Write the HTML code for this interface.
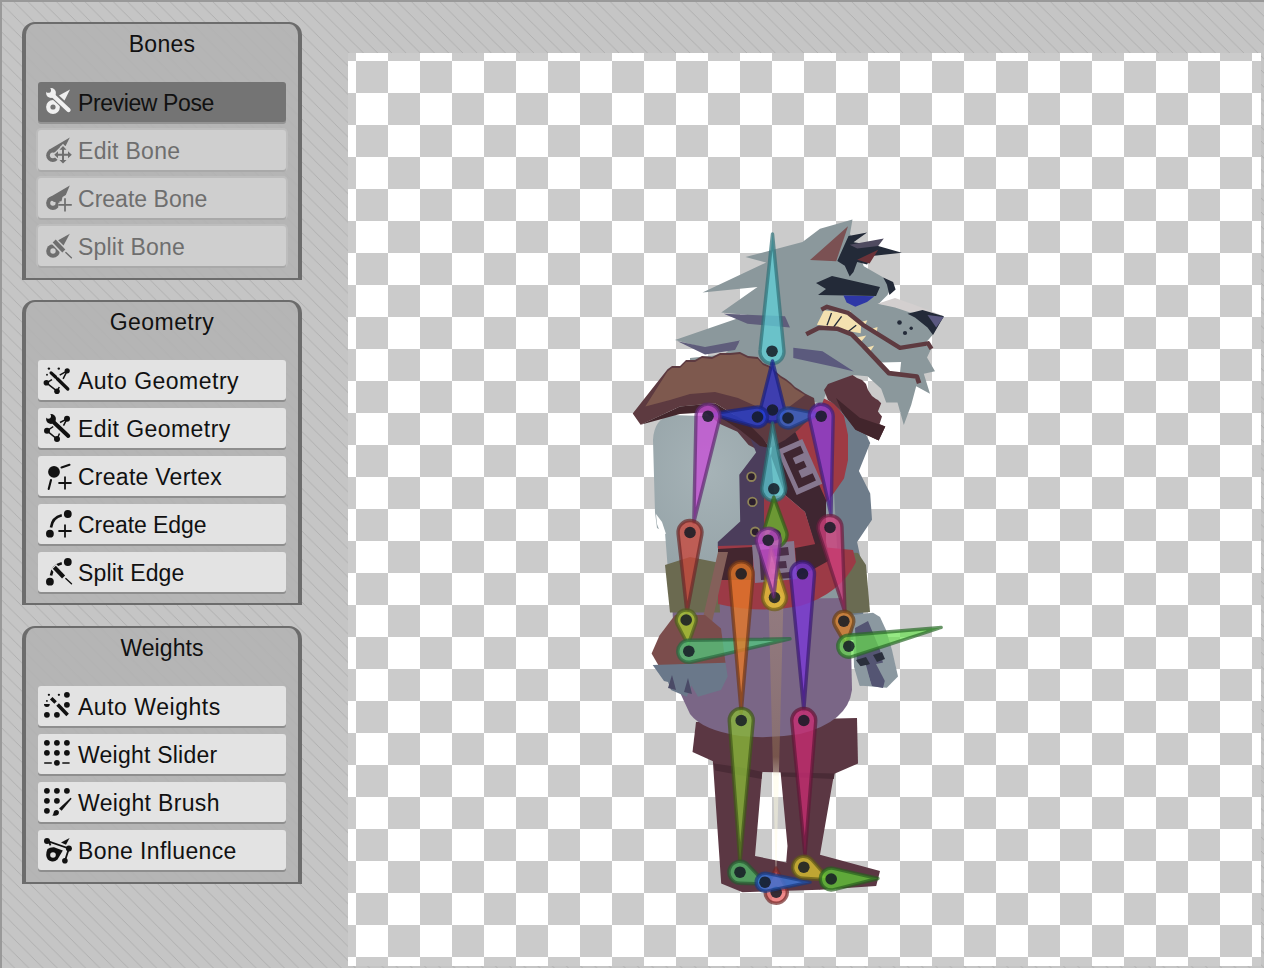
<!DOCTYPE html>
<html><head><meta charset="utf-8">
<style>
*{margin:0;padding:0;box-sizing:border-box}
html,body{width:1264px;height:968px;overflow:hidden;background:#c5c5c5;font-family:"Liberation Sans",sans-serif}
#bg{position:absolute;left:0;top:0}
.panel{position:absolute;left:22px;width:280px;border:solid #6c6c6c;border-width:2px 4px;border-radius:13px 13px 0 0;background:rgba(178,178,178,0.9)}
.title{position:absolute;left:0;right:0;top:7px;text-align:center;font-size:23px;color:#111;line-height:26px}
.btn{position:absolute;left:12px;width:248px;height:40px;border-radius:3px;background:#e3e3e3;box-shadow:0 2px 0 #8e8e8e}
.btn span{position:absolute;left:40px;top:8px;font-size:23px;line-height:26px;color:#111;white-space:nowrap}
.btn svg{position:absolute;left:2px;top:2px}
.btn.sel{background:#747474;box-shadow:0 2px 0 #939393}
.btn.dis{background:#cfcfcf;box-shadow:0 2px 0 #a9a9a9,0 0 0 2px #bdbdbd}
.btn.dis span{color:#6e6e6e}
#canvas{position:absolute;left:348px;top:53px;width:913px;height:913px;background-color:#fff;
 background-image:conic-gradient(#cbcbcb 25%,#fff 0 50%,#cbcbcb 0 75%,#fff 0);
 background-size:64px 64px;background-position:8px -24px}
#art{position:absolute;left:0;top:0}
</style></head><body>
<svg id="bg" width="1264" height="968">
<defs><pattern id="hat" patternUnits="userSpaceOnUse" width="14.2" height="14.2">
<path d="M-2,0 L16.2,18.2 M-2,-14.2 L16.2,4 M-2,14.2 L16.2,32.4" stroke="#a6a6a6" stroke-width="0.75"/>
</pattern></defs>
<rect width="1264" height="968" fill="#c5c5c5"/>
<rect width="1264" height="968" fill="url(#hat)"/>
<rect x="0" y="0" width="1264" height="2" fill="#999"/>
<rect x="0" y="0" width="2" height="968" fill="#999"/>
</svg>
<div id="canvas"></div>

<div class="panel" style="top:22px;height:258px">
 <div class="title" style="letter-spacing:0.25px">Bones</div>
 <div class="btn sel" style="top:58px"><svg width="36" height="36" viewBox="0 0 36 36"><circle cx="13" cy="23" r="6.9" fill="#f0f0f0"/><circle cx="13" cy="23" r="2.6" fill="#747474"/>
<path d="M12.5,11 L28.5,26" stroke="#747474" stroke-width="6.5" stroke-linecap="round"/>
<path d="M12.5,11 L28.5,26" stroke="#f0f0f0" stroke-width="4.4" stroke-linecap="round"/>
<circle cx="11" cy="9" r="4.9" fill="#f0f0f0"/><circle cx="8.4" cy="6.2" r="2.6" fill="#747474"/>
<path d="M19,11.5 L30,5.6 L24.5,16.5Z" fill="#f0f0f0"/></svg><span style="letter-spacing:-0.39px">Preview Pose</span></div>
 <div class="btn dis" style="top:106px"><svg width="36" height="36" viewBox="0 0 36 36"><circle cx="12.8" cy="23.3" r="6.6" fill="#6e6e6e"/><path d="M29.8,5.6 L8.5,18 L14,21 L22.5,13.5 L25.6,14Z" fill="#6e6e6e"/>
<circle cx="12.8" cy="23.3" r="2.9" fill="#cfcfcf"/>
<path d="M14.5,22.8 L31.5,22.8 M23,14 L23,31.5" stroke="#cfcfcf" stroke-width="5"/>
<path d="M13.8,22.8 L18.2,18.8 L18.2,26.8Z M32.2,22.8 L27.8,18.8 L27.8,26.8Z M23,13.6 L19,18 L27,18Z M23,32 L19,27.6 L27,27.6Z" fill="#cfcfcf" stroke="#cfcfcf" stroke-width="2.4"/>
<path d="M16.5,22.8 L29.5,22.8 M23,16 L23,29.5" stroke="#6e6e6e" stroke-width="2"/>
<path d="M14.3,22.8 L18,19.3 L18,26.3Z M31.8,22.8 L28,19.3 L28,26.3Z M23,14 L19.5,17.7 L26.5,17.7Z M23,31.6 L19.5,27.9 L26.5,27.9Z" fill="#6e6e6e"/></svg><span style="letter-spacing:0.29px">Edit Bone</span></div>
 <div class="btn dis" style="top:154px"><svg width="36" height="36" viewBox="0 0 36 36"><circle cx="12.9" cy="23.1" r="6.8" fill="#6e6e6e"/><circle cx="12.9" cy="23.1" r="2.7" fill="#cfcfcf"/>
<path d="M29.8,5.6 L8.5,18 L14,22 L21.5,21.3 L22.5,17 L25.8,15Z" fill="#6e6e6e"/>
<path d="M18.3,24.9 L31.8,24.9 M25,18.3 L25,31.5" stroke="#cfcfcf" stroke-width="4.2"/>
<path d="M18.3,24.9 L31.8,24.9 M25,18.3 L25,31.5" stroke="#6e6e6e" stroke-width="1.7"/></svg><span style="letter-spacing:0.02px">Create Bone</span></div>
 <div class="btn dis" style="top:202px"><svg width="36" height="36" viewBox="0 0 36 36"><circle cx="13" cy="23" r="6.8" fill="#6e6e6e"/><circle cx="13" cy="23" r="2.7" fill="#cfcfcf"/>
<path d="M13.5,12.5 L24,23.5" stroke="#cfcfcf" stroke-width="7"/>
<path d="M14.2,13 L23.8,23" stroke="#6e6e6e" stroke-width="4.2"/>
<path d="M25.8,24.6 L31.4,29.7" stroke="#6e6e6e" stroke-width="1.4" stroke-linecap="round"/>
<path d="M18.2,12.3 L29.8,5.8 L23.5,17.5Z" fill="#6e6e6e"/></svg><span style="letter-spacing:0.21px">Split Bone</span></div>
</div>
<div class="panel" style="top:300px;height:305px">
 <div class="title" style="letter-spacing:0.43px">Geometry</div>
 <div class="btn " style="top:58px"><svg width="36" height="36" viewBox="0 0 36 36"><circle cx="8.9" cy="6.6" r="1.2" fill="#111"/><circle cx="18.8" cy="6.6" r="1.2" fill="#111"/><circle cx="7" cy="12.8" r="0.95" fill="#111"/>
<path d="M27.2,8.8 L19.7,13.1 M27.2,8.8 L23.1,16.8 M6.4,20.8 L12,17.7 M6.4,20.8 L17,29.2 L19.3,25" stroke="#111" stroke-width="1.5" fill="none"/>
<circle cx="27.2" cy="8.8" r="2.6" fill="#111"/><circle cx="6.4" cy="20.8" r="2.8" fill="#111"/><circle cx="17" cy="29.2" r="2.8" fill="#111"/>
<path d="M11.1,10.9 L15.6,15 M17.3,16.7 L27.8,27" stroke="#111" stroke-width="3.3" stroke-linecap="round"/></svg><span style="letter-spacing:0.49px">Auto Geometry</span></div>
 <div class="btn " style="top:106px"><svg width="36" height="36" viewBox="0 0 36 36"><path d="M27,8.8 L20,12.5 M27,8.8 L23.5,15.7 M7,20.8 L13.3,16.5 M7,20.8 L17,29 L19.5,23.5" stroke="#111" stroke-width="1.5" fill="none"/>
<circle cx="27" cy="8.8" r="3" fill="#111"/><circle cx="7" cy="20.8" r="3" fill="#111"/><circle cx="17" cy="29" r="3" fill="#111"/>
<path d="M14,12.5 L28.3,26" stroke="#e3e3e3" stroke-width="6.5" stroke-linecap="round"/>
<path d="M14,12.5 L28.3,26" stroke="#111" stroke-width="4" stroke-linecap="round"/>
<circle cx="11" cy="9" r="4.9" fill="#111"/><circle cx="8.4" cy="6.1" r="2.6" fill="#e3e3e3"/></svg><span style="letter-spacing:0.44px">Edit Geometry</span></div>
 <div class="btn " style="top:154px"><svg width="36" height="36" viewBox="0 0 36 36"><circle cx="14" cy="13.9" r="5.9" fill="#111"/>
<path d="M21.5,9.5 L29.5,6.8 M11,22 L8.7,31" stroke="#111" stroke-width="2.1" stroke-linecap="round"/>
<path d="M18.4,25 L31.6,25 M25,18.4 L25,31.6" stroke="#111" stroke-width="1.8"/></svg><span style="letter-spacing:0.26px">Create Vertex</span></div>
 <div class="btn " style="top:202px"><svg width="36" height="36" viewBox="0 0 36 36"><circle cx="27.8" cy="8" r="3.9" fill="#111"/><circle cx="9.9" cy="27.7" r="3.9" fill="#111"/>
<path d="M11,21.5 Q12.3,11.5 21.8,9.3" stroke="#111" stroke-width="2.6" fill="none"/>
<path d="M18.4,25 L31.6,25 M25,18.4 L25,31.6" stroke="#111" stroke-width="1.8"/></svg><span style="letter-spacing:-0.05px">Create Edge</span></div>
 <div class="btn " style="top:250px"><svg width="36" height="36" viewBox="0 0 36 36"><circle cx="27.8" cy="8" r="3.9" fill="#111"/><circle cx="9.9" cy="27.7" r="3.9" fill="#111"/>
<path d="M11,21.5 Q12.3,11.5 21.8,9.3" stroke="#111" stroke-width="2.6" fill="none"/>
<path d="M13.5,12.5 L24,23.5" stroke="#e3e3e3" stroke-width="7.5"/>
<path d="M14.3,13.2 L23.6,23" stroke="#111" stroke-width="4.2"/>
<path d="M25.8,24.6 L31.5,29.7" stroke="#111" stroke-width="1.4" stroke-linecap="round"/></svg><span style="letter-spacing:0.17px">Split Edge</span></div>
</div>
<div class="panel" style="top:626px;height:258px">
 <div class="title" style="letter-spacing:0.08px">Weights</div>
 <div class="btn " style="top:58px"><svg width="36" height="36" viewBox="0 0 36 36"><circle cx="8.9" cy="6.8" r="1.15" fill="#111"/><circle cx="18.9" cy="6.8" r="1.15" fill="#111"/><circle cx="6.9" cy="12.9" r="0.95" fill="#111"/>
<path d="M4,16.1 L9.8,16.1 A2.9,2.9 0 0 1 4,16.1Z" fill="#111"/>
<circle cx="26.9" cy="6.8" r="2.9" fill="#111"/><circle cx="26.9" cy="16.8" r="2.9" fill="#111"/><circle cx="6.9" cy="26.8" r="2.9" fill="#111"/><circle cx="16.9" cy="26.8" r="2.9" fill="#111"/>
<path d="M11.2,10.3 L15.6,14.5 M17.6,16.6 L27.6,27" stroke="#111" stroke-width="3.6"/></svg><span style="letter-spacing:0.53px">Auto Weights</span></div>
 <div class="btn " style="top:106px"><svg width="36" height="36" viewBox="0 0 36 36"><circle cx="6.9" cy="6.8" r="2.9" fill="#111"/><circle cx="6.9" cy="16.8" r="2.9" fill="#111"/><circle cx="16.9" cy="6.8" r="2.9" fill="#111"/><circle cx="16.9" cy="16.8" r="2.9" fill="#111"/><circle cx="26.9" cy="6.8" r="2.9" fill="#111"/><circle cx="26.9" cy="16.8" r="2.9" fill="#111"/><circle cx="16.9" cy="26.8" r="2.9" fill="#111"/><path d="M4.2,27 L11.8,27 M22.3,27 L29.6,27" stroke="#111" stroke-width="1.6"/></svg><span style="letter-spacing:0.23px">Weight Slider</span></div>
 <div class="btn " style="top:154px"><svg width="36" height="36" viewBox="0 0 36 36"><circle cx="6.9" cy="6.8" r="2.9" fill="#111"/><circle cx="16.9" cy="6.8" r="2.9" fill="#111"/><circle cx="26.9" cy="6.8" r="2.9" fill="#111"/><circle cx="6.9" cy="16.8" r="2.9" fill="#111"/><circle cx="16.9" cy="16.8" r="2.9" fill="#111"/><circle cx="6.9" cy="26.8" r="2.9" fill="#111"/><path d="M19.1,24.5 L30.6,13.8 L31.6,14.8 L21.6,26.8Z" fill="#111"/>
<path d="M12.2,31.6 Q13.3,30.8 13.6,28.8 Q14,26 16.5,26 Q19.3,26.3 18.9,29 Q18.4,31.8 14.5,31.7Z" fill="#111"/></svg><span style="letter-spacing:0.35px">Weight Brush</span></div>
 <div class="btn " style="top:202px"><svg width="36" height="36" viewBox="0 0 36 36"><path d="M7,8.9 L28.9,16.5 L24.9,29 M9,10 L10.5,13.3" stroke="#111" stroke-width="1.8" fill="none"/>
<circle cx="7" cy="8.9" r="3" fill="#111"/><circle cx="28.9" cy="16.5" r="3" fill="#111"/><circle cx="24.9" cy="28.8" r="2.8" fill="#111"/>
<path d="M21,10.6 L29.6,5.9 L26,12.7Z" fill="#111"/>
<path d="M7.5,17 Q10,15 14,15.2 L22.8,18.5 L17.5,27.5 Q15,30 12,29.5 Q6.5,28.5 6.2,23 Q6.3,19.5 7.5,17Z" fill="#111"/>
<circle cx="13" cy="23" r="2.8" fill="#e3e3e3"/></svg><span style="letter-spacing:0.38px">Bone Influence</span></div>
</div>
<svg id="art" width="1264" height="968" viewBox="0 0 1264 968">
<polygon points="712.5,756.0 762.5,768.5 755.0,856.0 785.0,862.2 820.0,866.0 820.0,889.8 742.5,892.2 721.2,883.5" fill="#5b3743" />
<polygon points="780.0,766.0 835.0,768.5 820.0,854.8 880.0,871.0 876.2,886.0 820.0,889.8 786.2,862.2 787.5,846.0" fill="#5b3743" />
<polygon points="713.8,763.5 762.5,770.5 761.5,779.0 715.0,770.5" fill="#4a2b36" />
<polygon points="780.5,769.0 835.0,771.5 833.8,779.0 781.5,776.5" fill="#4a2b36" />
<polygon points="692.5,752.0 696.0,722.0 857.0,718.0 858.0,763.5 835.0,773.5 762.5,772.0 712.5,761.0" fill="#5b3743" />
<polygon points="826.0,400.0 850.0,410.0 864.5,431.8 870.2,443.0 858.9,471.0 870.2,493.5 872.0,519.7 857.1,542.1 862.7,568.3 866.0,590.0 860.0,640.0 830.0,640.0 826.0,500.0" fill="#6e7c8a" />
<defs><radialGradient id="armg" cx="0.3" cy="0.25" r="0.8"><stop offset="0" stop-color="#a6b3b7"/><stop offset="1" stop-color="#8a989d"/></radialGradient></defs>
<path d="M653,440 Q654,418 672,415 L760,418 L830,420 L840,600 L800,640 L680,640 L667.5,565 L665,532.5 L657,528 L655,512.5 Z" fill="url(#armg)"/>
<polygon points="656.0,514.0 662.0,522.0 666.0,534.0 660.0,532.0 657.0,524.0" fill="#ffffff" />
<path d="M672,600 L850,598 L852,690 Q848,722 800,734 Q770,739 740,736 Q702,730 690,714 L676,684 Z" fill="#7a6686"/>
<polygon points="705.0,412.0 762.0,418.0 762.0,452.0 748.6,444.9 737.4,431.8 720.0,424.0" fill="#5a3a44" />
<polygon points="756.1,452.4 739.3,474.8 740.2,521.5 717.8,542.1 717.8,547.7 778.5,547.7 771.0,456.0 763.6,437.4 745.0,425.0" fill="#4b3d5b" />
<circle cx="751.4" cy="476.7" r="4.3" fill="#2a1e2c" stroke="#8f8458" stroke-width="1.8"/>
<circle cx="752.4" cy="501.9" r="4.3" fill="#2a1e2c" stroke="#8f8458" stroke-width="1.8"/>
<circle cx="755.2" cy="531.8" r="4.3" fill="#2a1e2c" stroke="#8f8458" stroke-width="1.8"/>
<polygon points="823.0,398.0 835.0,404.0 844.0,416.0 848.0,435.0 848.0,460.0 844.0,478.5 830.9,497.2 823.4,504.7 793.5,428.0 804.7,418.7" fill="#9e3a44" />
<polygon points="774.8,422.4 793.5,428.0 826.0,500.0 826.0,552.0 816.0,550.0 805.0,512.0 785.0,495.0 771.0,456.0" fill="#3f2631" />
<polygon points="764.0,497.0 785.0,495.0 805.0,512.0 817.0,550.0 764.0,550.0" fill="#973845" />
<g transform="rotate(-24 799.5 467)"><rect x="785.5" y="442.5" width="28" height="49" fill="#86778f"/><path d="M790,448 L809,448 L809,456 L797,456 L797,463 L806,463 L806,470 L797,470 L797,478 L809,478 L809,486 L790,486Z" fill="#3f2631"/></g>
<polygon points="843.0,552.0 858.0,553.0 866.0,565.0 870.0,612.0 845.0,614.0" fill="#6a6b52" />
<polygon points="665.0,565.0 690.0,557.0 717.5,562.5 720.0,612.5 670.0,612.5" fill="#6b6a50" />
<path d="M718,546 L718,604 Q760,614 800,606 Q840,594 856,562 L853,550 L790,544 Z" fill="#9c3a46"/>
<polygon points="718.0,549.0 753.0,547.0 753.0,580.0 718.0,580.0" fill="#43262f" />
<polygon points="795.0,548.0 826.0,542.0 830.0,560.0 812.0,570.0 797.0,576.0" fill="#43262f" />
<polygon points="752.0,545.0 794.0,541.0 797.0,579.0 755.0,583.0" fill="#86778f" />
<polygon points="759.0,550.0 788.0,547.0 789.0,555.0 770.0,557.0 771.0,562.0 786.0,561.0 787.0,568.0 771.0,569.0 772.0,574.0 790.0,572.0 791.0,578.0 761.0,580.0" fill="#4a3048" />
<polygon points="718.0,552.0 728.0,552.0 712.0,622.0 702.0,622.0" fill="#84605a" />
<polygon points="651.6,653.6 659.5,635.5 675.0,615.0 705.0,615.0 721.0,628.6 725.5,662.7 705.0,673.0 660.0,668.0" fill="#7b4d4c" />
<polygon points="652.7,665.0 725.5,662.7 727.7,676.4 721.0,690.0 698.0,696.8 691.4,685.5 686.8,696.8 671.0,690.0 668.0,682.0 664.0,681.0" fill="#6a788a" />
<polygon points="672.0,675.0 676.0,690.0 668.0,688.0" fill="#4a4a66" />
<polygon points="688.0,678.0 692.0,694.0 684.0,692.0" fill="#4a4a66" />
<polygon points="852.7,615.0 873.0,612.7 880.0,617.0 886.0,630.0 892.0,650.0 898.0,676.4 886.8,687.7 859.5,685.5 854.0,667.0" fill="#8b98a0" />
<polygon points="855.0,628.0 868.0,621.0 880.0,650.0 886.0,676.0 883.0,688.0 872.0,686.0 866.0,668.0 857.0,662.0" fill="#545573" />
<polygon points="856.0,660.0 866.0,657.0 870.0,664.0 861.0,667.0" fill="#2a2f3c" />
<polygon points="873.0,655.0 882.0,652.0 885.0,659.0 877.0,662.0" fill="#2a2f3c" />
<polygon points="857.0,667.0 866.0,665.0 871.0,684.0 860.0,686.0" fill="#8b98a0" />
<polygon points="876.0,664.0 886.0,662.0 897.0,676.0 887.0,685.0" fill="#8b98a0" />
<polygon points="852.5,219.5 850.0,233.8 863.8,266.2 882.5,277.0 892.5,284.5 887.5,295.0 878.8,303.8 915.0,308.0 943.8,316.2 933.0,334.5 923.8,345.0 932.0,347.0 927.0,357.5 935.0,371.2 923.8,373.8 930.0,393.8 916.2,386.2 911.2,405.0 903.8,425.0 897.5,402.5 886.2,402.5 881.2,388.8 867.5,376.2 852.5,375.0 830.0,385.0 828.0,388.0 822.0,404.0 806.0,400.0 785.0,398.0 760.0,388.0 740.0,375.0 690.0,365.0 690.0,358.0 723.8,354.5 740.0,341.2 705.0,348.0 675.0,340.0 747.5,315.0 721.2,312.5 757.5,287.0 702.5,292.5 766.2,262.5 745.5,257.0 802.5,242.0 820.0,228.8" fill="#8b989c" />
<polygon points="632.7,413.6 667.5,369.3 672.0,366.0 680.0,366.0 686.0,360.0 695.0,360.0 702.0,356.0 712.0,357.0 720.0,353.0 730.0,353.0 740.0,352.0 748.0,356.0 757.7,357.0 763.0,363.0 770.0,366.0 775.0,371.0 781.0,376.0 786.0,379.0 791.0,383.0 795.0,387.0 800.0,390.0 805.0,393.5 814.0,398.0 816.0,410.0 806.0,422.0 798.0,430.0 785.0,440.0 770.0,448.0 762.4,438.0 746.6,422.3 715.0,403.3 680.0,406.5 640.6,424.7" fill="#5d3a40" />
<polygon points="645.3,406.5 667.5,371.6 672.0,368.0 680.0,368.0 686.0,362.0 695.0,362.0 702.0,358.0 712.0,359.0 720.0,355.0 730.0,355.0 740.0,354.0 748.0,358.0 757.7,359.0 763.0,365.0 770.0,368.0 775.0,373.0 781.0,378.0 786.0,381.0 791.0,385.0 795.0,389.0 800.0,392.0 805.0,395.0 785.0,410.0 760.0,408.0 738.0,398.0 715.0,392.0 690.0,394.0 670.0,400.0" fill="#7e594e" />
<polygon points="640.6,424.7 680.0,406.5 715.0,403.3 746.6,422.3 762.4,438.0 770.0,448.0 760.0,446.0 740.0,430.0 712.0,412.0 680.0,414.0" fill="#43262c" />
<polygon points="880.9,362.4 901.1,361.9 900.0,372.5 888.8,372.5" fill="#ffffff" />
<polygon points="723.8,313.8 785.0,316.2 790.0,327.5 747.5,323.8" fill="#5f5d7b" />
<polygon points="677.5,341.2 705.0,347.0 740.0,340.5 735.0,350.0 705.0,354.5" fill="#5f5d7b" />
<polygon points="793.3,347.8 822.5,351.2 853.9,371.4 839.3,368.0 793.3,357.9" fill="#5b5a7d" />
<polygon points="824.0,390.0 828.0,384.0 852.5,375.0 857.0,378.0 862.0,380.0 866.0,384.0 868.0,390.0 872.0,396.0 876.0,399.0 878.0,400.0 881.2,403.3 877.9,411.6 882.0,416.5 879.5,424.0 885.3,426.4 878.7,440.5 855.5,429.8 842.3,412.4 834.0,404.0 828.0,400.0" fill="#5c363f" />
<polygon points="836.0,398.0 859.7,417.8 885.3,426.4 878.7,440.5 855.5,429.8 842.3,412.4" fill="#42252c" />
<polygon points="810.0,260.0 848.0,226.2 836.2,261.2" fill="#7b5153" />
<polygon points="837.3,260.9 848.5,236.1 867.1,232.4 853.5,242.3 878.2,246.0 901.8,252.8 872.0,255.9 867.1,264.6 857.2,262.1 853.5,272.0 849.7,276.4 844.8,265.8" fill="#232a38" />
<polygon points="849.7,244.8 883.8,238.6 878.2,246.0 857.2,248.5" fill="#4f4b60" />
<polygon points="857.2,259.7 878.2,249.7 869.6,263.4" fill="#6b3238" />
<polygon points="816.0,283.0 832.0,276.0 880.0,287.0 876.0,296.0 818.0,295.0 826.0,289.0" fill="#232a38" />
<polygon points="883.2,277.6 893.1,282.0 895.6,289.4 889.4,295.0 886.9,284.4" fill="#232a38" />
<polygon points="843.5,295.6 874.5,296.2 867.0,302.0 855.3,306.7 846.6,302.4" fill="#2e37a6" />
<polygon points="877.5,303.8 895.0,298.0 915.0,305.0 943.8,316.2 910.0,312.5 895.0,307.5" fill="#d3cfcf" />
<polygon points="907.5,313.8 922.5,310.0 943.8,316.2 933.0,335.0 927.5,327.5 915.0,317.5" fill="#232a38" />
<polygon points="927.5,315.0 943.8,317.0 936.2,327.5" fill="#5a5880" />
<circle cx="899.5" cy="322.5" r="2.3" fill="#232a38"/>
<circle cx="905" cy="333" r="2.1" fill="#232a38"/>
<circle cx="911.2" cy="328.2" r="1.7" fill="#232a38"/>
<polygon points="816.9,324.8 824.2,310.2 848.3,313.5 861.2,324.8 860.7,333.2 848.3,331.0 833.7,327.6" fill="#f4e1b0" />
<polyline points="827.0,325.3 831.5,313.0" fill="none" stroke="#232a38" stroke-width="1.3" stroke-linejoin="round" />
<polyline points="833.7,327.0 841.6,316.3" fill="none" stroke="#232a38" stroke-width="1.3" stroke-linejoin="round" />
<polyline points="848.3,331.5 856.2,325.3" fill="none" stroke="#232a38" stroke-width="1.3" stroke-linejoin="round" />
<polygon points="855.1,337.7 866.3,335.4 860.7,342.2" fill="#f4e1b0" />
<polygon points="866.3,347.8 874.2,345.6 869.7,352.3" fill="#f4e1b0" />
<polygon points="860.7,322.0 867.4,320.3 864.0,327.6" fill="#f4e1b0" />
<polygon points="871.9,328.7 877.5,327.0 876.4,334.3" fill="#f4e1b0" />
<polygon points="846.6,311.9 850.6,310.7 849.4,315.2" fill="#f4e1b0" />
<polyline points="821.3,309.6 827.0,306.8 848.3,313.0 862.9,324.8 900.0,347.8 928.1,343.3 931.5,348.9" fill="none" stroke="#5e3a40" stroke-width="4.4" stroke-linejoin="round" />
<polyline points="806.2,334.3 819.1,327.8 837.1,328.7 851.7,334.3 862.9,345.6 888.8,373.1 916.9,376.5 919.1,383.2" fill="none" stroke="#5e3a40" stroke-width="4.6" stroke-linejoin="round" />
<defs><linearGradient id="palg" gradientUnits="userSpaceOnUse" x1="0" y1="600" x2="0" y2="885"><stop offset="0" stop-color="#b09478"/><stop offset="0.55" stop-color="#9a7a58"/><stop offset="0.62" stop-color="#fffbe0"/><stop offset="1" stop-color="#fffbe0"/></linearGradient></defs>
<path d="M768.5,597.7 L776.0,885.0 L783.5,597.7 A7.5,7.5 0 1 0 768.5,597.7Z" fill="url(#palg)" fill-opacity="0.45" stroke="none" stroke-opacity="0.7" stroke-width="3.4" stroke-linejoin="round"/>
<path d="M783.9,350.1 L772.5,234.0 L760.1,350.0 A12,12 0 1 0 783.9,350.1Z" fill="#5fd0d8" fill-opacity="0.75" stroke="#2f7078" stroke-opacity="0.7" stroke-width="3.4" stroke-linejoin="round"/>
<circle cx="772.0" cy="351.2" r="5.8" fill="#141a24" fill-opacity="0.85"/>
<path d="M784.1,407.1 L772.5,361.0 L760.9,407.1 A12,12 0 1 0 784.1,407.1Z" fill="#2a35d0" fill-opacity="0.75" stroke="#1a2080" stroke-opacity="0.7" stroke-width="3.4" stroke-linejoin="round"/>
<circle cx="772.5" cy="410.0" r="5.8" fill="#141a24" fill-opacity="0.85"/>
<path d="M756.0,407.1 L710.0,414.0 L754.8,426.6 A10,10 0 1 0 756.0,407.1Z" fill="#2440d8" fill-opacity="0.75" stroke="#1a2480" stroke-opacity="0.7" stroke-width="3.4" stroke-linejoin="round"/>
<circle cx="757.5" cy="417.0" r="5.8" fill="#141a24" fill-opacity="0.85"/>
<path d="M792.3,427.0 L820.0,414.0 L789.9,408.2 A10,10 0 1 0 792.3,427.0Z" fill="#3a6ad8" fill-opacity="0.75" stroke="#1f3a80" stroke-opacity="0.7" stroke-width="3.4" stroke-linejoin="round"/>
<circle cx="788.0" cy="418.0" r="5.8" fill="#141a24" fill-opacity="0.85"/>
<path d="M696.0,416.0 L693.8,522.5 L719.6,419.2 A12,12 0 1 0 696.0,416.0Z" fill="#c64fd6" fill-opacity="0.78" stroke="#602a70" stroke-opacity="0.7" stroke-width="3.4" stroke-linejoin="round"/>
<circle cx="708.0" cy="416.2" r="5.8" fill="#141a24" fill-opacity="0.85"/>
<path d="M809.5,418.9 L831.0,515.0 L833.2,416.5 A12,12 0 1 0 809.5,418.9Z" fill="#8a40d8" fill-opacity="0.78" stroke="#40207a" stroke-opacity="0.7" stroke-width="3.4" stroke-linejoin="round"/>
<circle cx="821.2" cy="416.2" r="5.8" fill="#141a24" fill-opacity="0.85"/>
<path d="M678.1,533.9 L687.0,612.5 L701.8,534.7 A12,12 0 1 0 678.1,533.9Z" fill="#c8483c" fill-opacity="0.78" stroke="#6a2a2a" stroke-opacity="0.7" stroke-width="3.4" stroke-linejoin="round"/>
<circle cx="690.0" cy="532.5" r="5.8" fill="#141a24" fill-opacity="0.85"/>
<path d="M818.6,531.2 L845.0,612.5 L842.0,527.1 A12,12 0 1 0 818.6,531.2Z" fill="#d0407e" fill-opacity="0.78" stroke="#6a2040" stroke-opacity="0.7" stroke-width="3.4" stroke-linejoin="round"/>
<circle cx="830.0" cy="527.5" r="5.8" fill="#141a24" fill-opacity="0.85"/>
<path d="M677.4,624.6 L688.0,645.0 L695.7,623.3 A10,10 0 1 0 677.4,624.6Z" fill="#a8c832" fill-opacity="0.8" stroke="#506020" stroke-opacity="0.7" stroke-width="3.4" stroke-linejoin="round"/>
<circle cx="686.2" cy="620.0" r="5.8" fill="#141a24" fill-opacity="0.85"/>
<path d="M691.3,662.0 L790.0,638.8 L688.6,640.3 A11,11 0 1 0 691.3,662.0Z" fill="#50d080" fill-opacity="0.7" stroke="#2a6a40" stroke-opacity="0.7" stroke-width="3.4" stroke-linejoin="round"/>
<circle cx="688.8" cy="651.2" r="5.8" fill="#141a24" fill-opacity="0.85"/>
<path d="M835.1,626.3 L846.0,645.0 L853.2,624.6 A10,10 0 1 0 835.1,626.3Z" fill="#d8862e" fill-opacity="0.8" stroke="#6a4018" stroke-opacity="0.7" stroke-width="3.4" stroke-linejoin="round"/>
<circle cx="843.8" cy="621.2" r="5.8" fill="#141a24" fill-opacity="0.85"/>
<path d="M852.2,656.7 L941.2,627.5 L847.8,635.3 A11,11 0 1 0 852.2,656.7Z" fill="#6ae050" fill-opacity="0.7" stroke="#2a6a28" stroke-opacity="0.7" stroke-width="3.4" stroke-linejoin="round"/>
<circle cx="848.8" cy="646.2" r="5.8" fill="#141a24" fill-opacity="0.85"/>
<path d="M785.5,486.3 L772.5,423.0 L761.9,486.8 A12,12 0 1 0 785.5,486.3Z" fill="#5ac8d0" fill-opacity="0.75" stroke="#2a6a70" stroke-opacity="0.7" stroke-width="3.4" stroke-linejoin="round"/>
<circle cx="773.8" cy="488.8" r="5.8" fill="#141a24" fill-opacity="0.85"/>
<path d="M786.3,530.8 L773.8,497.0 L763.5,531.6 A12,12 0 1 0 786.3,530.8Z" fill="#62b030" fill-opacity="0.8" stroke="#306018" stroke-opacity="0.7" stroke-width="3.4" stroke-linejoin="round"/>
<circle cx="775.0" cy="535.0" r="5.8" fill="#141a24" fill-opacity="0.85"/>
<path d="M785.9,593.8 L771.0,548.0 L762.7,595.4 A12,12 0 1 0 785.9,593.8Z" fill="#e8c838" fill-opacity="0.8" stroke="#706018" stroke-opacity="0.7" stroke-width="3.4" stroke-linejoin="round"/>
<circle cx="774.5" cy="597.5" r="5.8" fill="#141a24" fill-opacity="0.85"/>
<path d="M756.8,543.8 L773.8,597.0 L780.2,541.6 A12,12 0 1 0 756.8,543.8Z" fill="#d050d8" fill-opacity="0.75" stroke="#602a70" stroke-opacity="0.7" stroke-width="3.4" stroke-linejoin="round"/>
<circle cx="768.2" cy="540.2" r="5.8" fill="#141a24" fill-opacity="0.85"/>
<path d="M729.3,574.8 L741.2,712.5 L753.2,574.8 A12,12 0 1 0 729.3,574.8Z" fill="#e87a28" fill-opacity="0.78" stroke="#703818" stroke-opacity="0.7" stroke-width="3.4" stroke-linejoin="round"/>
<circle cx="741.2" cy="573.8" r="5.8" fill="#141a24" fill-opacity="0.85"/>
<path d="M790.6,574.9 L803.8,710.0 L814.5,574.7 A12,12 0 1 0 790.6,574.9Z" fill="#7a38d8" fill-opacity="0.78" stroke="#3a1a70" stroke-opacity="0.7" stroke-width="3.4" stroke-linejoin="round"/>
<circle cx="802.5" cy="573.8" r="5.8" fill="#141a24" fill-opacity="0.85"/>
<path d="M729.3,721.4 L740.0,862.5 L753.2,721.6 A12,12 0 1 0 729.3,721.4Z" fill="#88b838" fill-opacity="0.78" stroke="#405818" stroke-opacity="0.7" stroke-width="3.4" stroke-linejoin="round"/>
<circle cx="741.2" cy="720.5" r="5.8" fill="#141a24" fill-opacity="0.85"/>
<path d="M791.8,721.7 L805.0,855.0 L815.7,721.5 A12,12 0 1 0 791.8,721.7Z" fill="#c82c72" fill-opacity="0.78" stroke="#601838" stroke-opacity="0.7" stroke-width="3.4" stroke-linejoin="round"/>
<circle cx="803.8" cy="720.5" r="5.8" fill="#141a24" fill-opacity="0.85"/>
<path d="M739.7,883.2 L766.0,884.0 L748.0,864.7 A11,11 0 1 0 739.7,883.2Z" fill="#50b868" fill-opacity="0.78" stroke="#285830" stroke-opacity="0.7" stroke-width="3.4" stroke-linejoin="round"/>
<circle cx="740.0" cy="872.2" r="5.8" fill="#141a24" fill-opacity="0.85"/>
<path d="M786.0,887.2 L776.0,868.0 L766.4,887.4 A11,11 0 1 0 786.0,887.2Z" fill="#e85858" fill-opacity="0.7" stroke="#702828" stroke-opacity="0.7" stroke-width="3.4" stroke-linejoin="round"/>
<circle cx="776.2" cy="892.2" r="5.8" fill="#141a24" fill-opacity="0.85"/>
<path d="M766.8,891.1 L810.0,882.2 L766.8,873.4 A9,9 0 1 0 766.8,891.1Z" fill="#3a78e0" fill-opacity="0.8" stroke="#1a3a80" stroke-opacity="0.7" stroke-width="3.4" stroke-linejoin="round"/>
<circle cx="765.0" cy="882.2" r="5.8" fill="#141a24" fill-opacity="0.85"/>
<path d="M803.0,878.2 L830.0,880.0 L811.9,859.9 A11,11 0 1 0 803.0,878.2Z" fill="#d8c030" fill-opacity="0.8" stroke="#605818" stroke-opacity="0.7" stroke-width="3.4" stroke-linejoin="round"/>
<circle cx="803.8" cy="867.2" r="5.8" fill="#141a24" fill-opacity="0.85"/>
<path d="M834.0,889.7 L878.0,878.5 L833.7,868.3 A11,11 0 1 0 834.0,889.7Z" fill="#60c838" fill-opacity="0.78" stroke="#2a6020" stroke-opacity="0.7" stroke-width="3.4" stroke-linejoin="round"/>
<circle cx="831.2" cy="879.0" r="5.8" fill="#141a24" fill-opacity="0.85"/>
</svg>
</body></html>
